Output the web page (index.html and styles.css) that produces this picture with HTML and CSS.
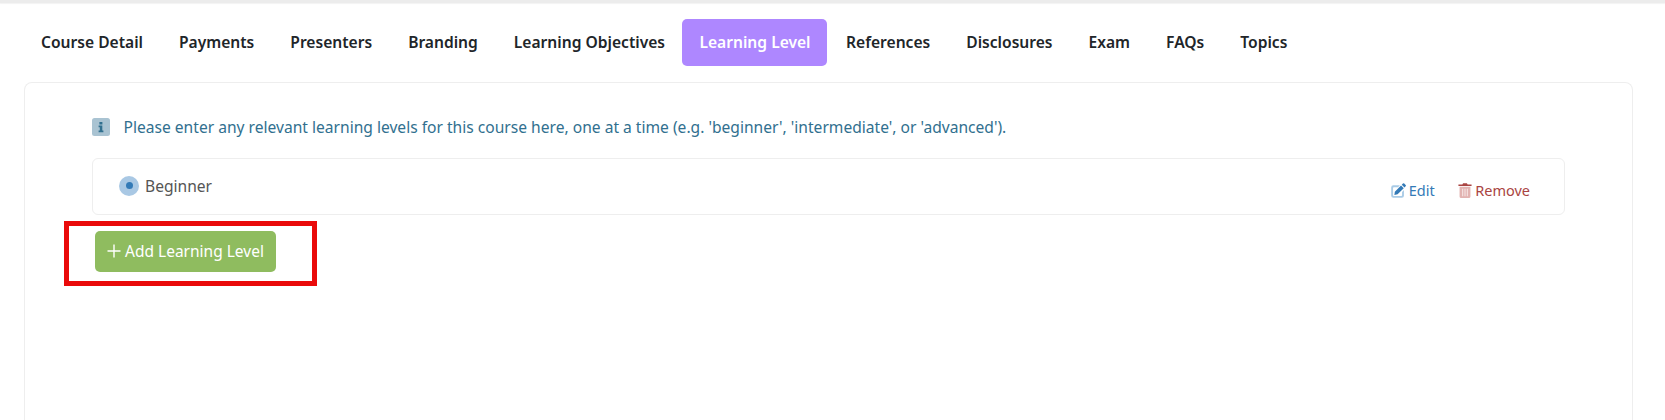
FILE: index.html
```html
<!DOCTYPE html>
<html lang="en">
<head>
<meta charset="utf-8">
<title>Learning Level</title>
<link rel="stylesheet" href="styles.css">
</head>
<body>
<div class="topbar"></div>
<main class="page">
  <nav class="tabs">
    <a class="tab">Course Detail</a>
    <a class="tab">Payments</a>
    <a class="tab">Presenters</a>
    <a class="tab">Branding</a>
    <a class="tab">Learning Objectives</a>
    <a class="tab active">Learning Level</a>
    <a class="tab">References</a>
    <a class="tab">Disclosures</a>
    <a class="tab">Exam</a>
    <a class="tab">FAQs</a>
    <a class="tab">Topics</a>
  </nav>
  <section class="card">
    <p class="notice">
      <svg class="info-icon" viewBox="0 0 18 18" aria-hidden="true">
        <rect width="18" height="18" rx="2.5" fill="#a9c3d2"/>
        <path d="M7.4 4h3v2.4h-3zM6.6 7.6h3.7v5h1.1v1.6H6.6v-1.6h1.2V9.200H6.600z" fill="#31708f"/>
      </svg>
      <span>Please enter any relevant learning levels for this course here, one at a time (e.g. 'beginner', 'intermediate', or 'advanced').</span>
    </p>
    <div class="level-row">
      <div class="level-name">
        <span class="radio"><span class="radio-dot"></span></span>
        <span>Beginner</span>
      </div>
      <div class="level-actions">
        <a class="action edit">
          <svg class="action-icon" viewBox="0 0 16 16" aria-hidden="true">
            <path d="M2.500 2.500h7l-2 2H3a.8.8 0 0 0-.8.800v7.700a.8.8 0 0 0 .8.800h8a.8.800 0 0 0 .8-.8V9.500l2-2v6a2.300 2.300 0 0 1-2.300 2.300h-9A2.300 2.300 0 0 1 .2 13.500v-8.700a2.300 2.300 0 0 1 2.300-2.300z" fill="#a9cbe6"/>
            <path d="M12.700.6a1 1 0 0 1 1.400 0l1.500 1.500a1 1 0 0 1 0 1.400l-1.200 1.200-2.900-2.900zM10.700 2.600l2.900 2.900-6.600 6.600-3.400.6.500-3.500z" fill="#337ab7"/>
          </svg>
          <span>Edit</span>
        </a>
        <a class="action remove">
          <svg class="action-icon trash" viewBox="0 0 14 16" aria-hidden="true">
            <path d="M1.200 4h11.600v10.200A1.700 1.700 0 0 1 11.100 16H2.900a1.700 1.700 0 0 1-1.700-1.800z" fill="#e2b3b1"/>
            <path d="M3.900 6h1.200v8H3.900zM6.400 6h1.200v8H6.400zM8.900 6h1.200v8H8.900z" fill="#f5e3e2"/>
            <path d="M5 .3h4l.8 1.300H14v1.600H0V1.600h4.200z" fill="#a94442"/>
          </svg>
          <span>Remove</span>
        </a>
      </div>
    </div>
    <div class="add-wrap">
      <button class="add-btn" type="button"><svg class="plus" viewBox="0 0 14 14" aria-hidden="true"><path d="M7 .5v13M.5 7h13" stroke="#fff" stroke-width="1.400" fill="none"/></svg>Add Learning Level</button>
      <span class="highlight"></span>
    </div>
  </section>
</main>
</body>
</html>
```
FILE: styles.css
```css
* { box-sizing: border-box; }
html, body { margin: 0; height: 420px; overflow: hidden; background: #fff; }
body { font-family: "Noto Sans", "Open Sans", sans-serif; font-size: 15.6px; color: #212529; }
.topbar { height: 3px; background: #ececec; box-shadow: 0 1px 1px rgba(0,0,0,.05); }
.page { padding: 16px 32px 0 23px; }
.tabs { display: flex; height: 47px; align-items: stretch; }
.tab { display: flex; align-items: center; padding: 0 18px 2px; font-weight: 600; font-size: 15.6px; color: #212529; border-radius: 5px; }
.tab.active { background: #ae87ff; color: #fff; padding: 0 16px 2px 17.5px; margin: 0 1.5px 0 -1px; }
.card { margin: 16px 0 0 1px; height: 338px; border: 1px solid #eeeeee; border-bottom: 0; border-radius: 8px 8px 0 0; padding: 32px 67px 0 67px; }
.notice { margin: 0; display: flex; align-items: center; gap: 13.5px; height: 24px; color: #31708f; font-size: 15.6px; }
.info-icon { width: 18px; height: 18px; flex: none; }
.level-row { margin-top: 19px; height: 57px; border: 1px solid #eeeeee; border-radius: 6px; display: flex; justify-content: space-between; padding: 0 34px 0 26px; color: #555; }
.level-name { display: flex; align-items: center; gap: 6px; height: 53px; }
.radio { width: 20px; height: 20px; border-radius: 50%; background: #a9c8e4; display: flex; align-items: center; justify-content: center; }
.radio-dot { width: 7px; height: 7px; border-radius: 50%; background: #337ab7; }
.level-actions { display: flex; gap: 23.5px; padding-top: 19px; font-size: 14.5px; }
.action { display: flex; align-items: center; gap: 3px; height: 24px; }
.action-icon { width: 15px; height: 15px; }
.action-icon.trash { width: 14px; height: 15px; }
.edit { color: #337ab7; }
.remove { color: #a94442; }
.add-wrap { position: relative; width: 181px; margin: 16px 0 0 3px; }
.add-btn { display: flex; align-items: center; justify-content: center; gap: 4px; width: 181px; height: 41px; border: 0; border-radius: 5px; background: #8fbc5f; color: #fff; font-family: inherit; font-size: 15.5px; padding: 0 0 2px; }
.plus { width: 14px; height: 14px; }
.highlight { position: absolute; left: -31px; top: -10px; width: 253px; height: 65px; border: 5px solid #ea0a0a; pointer-events: none; }
```
